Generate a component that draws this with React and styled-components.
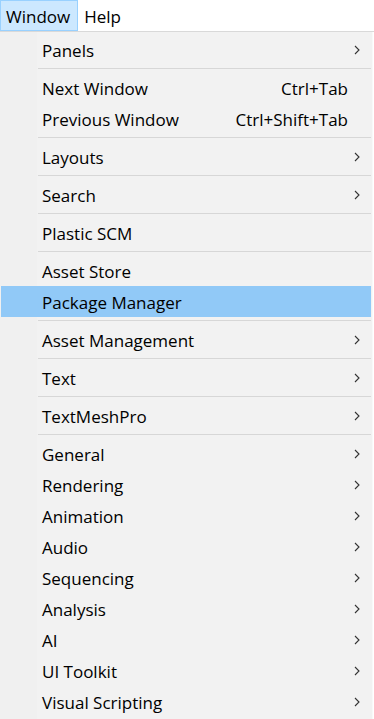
import React from "react";
import styled, { createGlobalStyle } from "styled-components";

const GlobalStyle = createGlobalStyle`
  html, body {
    margin: 0;
    padding: 0;
    background: #ffffff;
  }
  body {
    font-family: "Open Sans", "Noto Sans", sans-serif;
    color: #000;
    width: 374px;
    height: 719px;
    overflow: hidden;
  }
`;

const MenuBar = styled.div`
  display: flex;
  height: 31px;
  background: #ffffff;
  border-bottom: 1px solid #d9d9d9;
`;

const BarItem = styled.div`
  display: flex;
  align-items: center;
  padding: 1px 7px 0 5px;
  font-size: 17px;
  box-sizing: border-box;
  height: 31px;
  border: 1px solid ${(p) => (p.$open ? "#99d1ff" : "transparent")};
  background: ${(p) => (p.$open ? "#cce8ff" : "transparent")};
`;

const Menu = styled.div`
  width: 373px;
  box-sizing: border-box;
  padding: 2px 1px 2px 1px;
  background: linear-gradient(to right, #f0f0f0 37px, #f2f2f2 37px);
  border-right: 1px solid #f9f9f9;
`;

const Item = styled.div`
  display: flex;
  align-items: center;
  box-sizing: border-box;
  height: 31px;
  padding: 2px 11px 0 41px;
  font-size: 17px;
  background: ${(p) => (p.$active ? "#91c9f7" : "transparent")};
`;

const Label = styled.span`
  flex: 1;
  white-space: nowrap;
`;

const Shortcut = styled.span`
  margin-right: 12px;
  white-space: nowrap;
`;

const Arrow = styled.svg`
  width: 6px;
  height: 10px;
  margin-top: -2px;
`;

const Separator = styled.div`
  height: 7px;
  display: flex;
  align-items: center;
  padding-left: 37px;

  &::after {
    content: "";
    flex: 1;
    height: 1px;
    background: #d7d7d7;
  }
`;

const Chevron = () => (
  <Arrow viewBox="0 0 6 10">
    <polyline points="1,1 5,5 1,9" fill="none" stroke="#333" strokeWidth="1.1" />
  </Arrow>
);

const groups = [
  [{ label: "Panels", sub: true }],
  [
    { label: "Next Window", key: "Ctrl+Tab" },
    { label: "Previous Window", key: "Ctrl+Shift+Tab" },
  ],
  [{ label: "Layouts", sub: true }],
  [{ label: "Search", sub: true }],
  [{ label: "Plastic SCM" }],
  [{ label: "Asset Store" }, { label: "Package Manager", active: true }],
  [{ label: "Asset Management", sub: true }],
  [{ label: "Text", sub: true }],
  [{ label: "TextMeshPro", sub: true }],
  [
    { label: "General", sub: true },
    { label: "Rendering", sub: true },
    { label: "Animation", sub: true },
    { label: "Audio", sub: true },
    { label: "Sequencing", sub: true },
    { label: "Analysis", sub: true },
    { label: "AI", sub: true },
    { label: "UI Toolkit", sub: true },
    { label: "Visual Scripting", sub: true },
  ],
];

export default function App() {
  return (
    <>
      <GlobalStyle />
      <MenuBar>
        <BarItem $open>Window</BarItem>
        <BarItem>Help</BarItem>
      </MenuBar>
      <Menu>
        {groups.map((group, gi) => (
          <React.Fragment key={gi}>
            {gi > 0 && <Separator />}
            {group.map((item) => (
              <Item key={item.label} $active={item.active}>
                <Label>{item.label}</Label>
                {item.key && <Shortcut>{item.key}</Shortcut>}
                {item.sub && <Chevron />}
              </Item>
            ))}
          </React.Fragment>
        ))}
      </Menu>
    </>
  );
}
